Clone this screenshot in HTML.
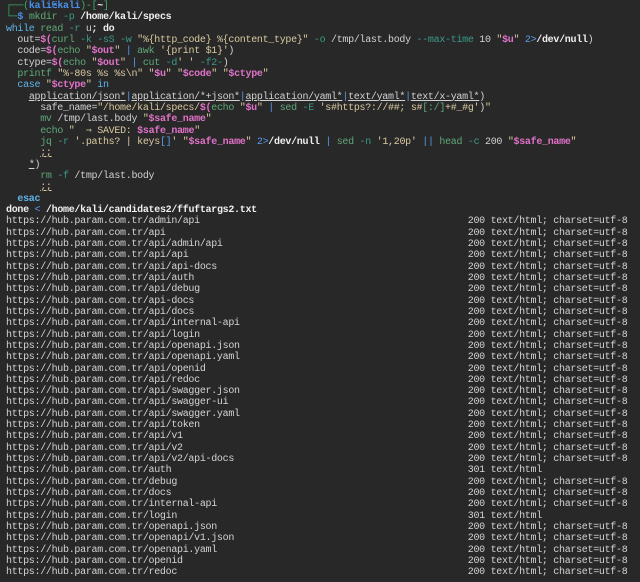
<!DOCTYPE html>
<html><head><meta charset="utf-8"><style>
html,body{margin:0;padding:0;background:#282828;width:640px;height:582px;overflow:hidden}
pre{margin:0;padding:1px 0 0 6px;font-family:"Liberation Mono","DejaVu Sans Mono",monospace;font-size:10px;letter-spacing:-0.3px;line-height:11.33px;color:#d2d2d2;white-space:pre}
.g{color:#3faa6a}.bl{color:#4a8fe8;font-weight:bold}.b{font-weight:bold;color:#f0f0f0}
.c{color:#5fa878}.o{color:#3b9a88}.s{color:#d9c9a0}.v{color:#e072c8;font-weight:bold}
.k{color:#5fb4e8}.p{color:#5a9be8}.u{text-decoration:underline}.d{color:#d4d4d4}
.at{display:inline-block;width:5.7px;font-size:7.5px;overflow:hidden;vertical-align:top;text-align:center;letter-spacing:0}
</style></head><body><pre><span class="g">┌──(</span><span class="bl">kali<span class="at">㉿</span>kali</span><span class="g">)-[</span><span class="b">~</span><span class="g">]</span>
<span class="g">└─</span><span class="bl">$</span> <span class="c">mkdir</span> <span class="o">-p</span> <span class="b">/home/kali/specs</span>
<span class="k">while</span> <span class="c">read</span> <span class="o">-r</span> u<span class="b">;</span> <span class="b">do</span>
  out=<span class="v">$(</span><span class="c">curl</span> <span class="o">-k</span> <span class="o">-sS</span> <span class="o">-w</span> <span class="s">"%{http_code} %{content_type}"</span> <span class="o">-o</span> /tmp/last.body <span class="o">--max-time</span> 10 <span class="s">"</span><span class="v">$u</span><span class="s">"</span> <span class="p">2&gt;</span><span class="b">/dev/null</span>)
  code=<span class="v">$(</span><span class="c">echo</span> <span class="s">"</span><span class="v">$out</span><span class="s">"</span> <span class="p">|</span> <span class="c">awk</span> <span class="s">'{print $1}'</span>)
  ctype=<span class="v">$(</span><span class="c">echo</span> <span class="s">"</span><span class="v">$out</span><span class="s">"</span> <span class="p">|</span> <span class="c">cut</span> <span class="o">-d</span><span class="s">' '</span> <span class="o">-f2-</span>)
  <span class="c">printf</span> <span class="s">"%-80s %s %s\n"</span> <span class="s">"</span><span class="v">$u</span><span class="s">"</span> <span class="s">"</span><span class="v">$code</span><span class="s">"</span> <span class="s">"</span><span class="v">$ctype</span><span class="s">"</span>
  <span class="k">case</span> <span class="s">"</span><span class="v">$ctype</span><span class="s">"</span> <span class="k">in</span>
    <span class="u">application/json*</span><span class="p">|</span><span class="u">application/*+json*</span><span class="p">|</span><span class="u">application/yaml*</span><span class="p">|</span><span class="u">text/yaml*</span><span class="p">|</span><span class="u">text/x-yaml*</span>)
      safe_name=<span class="s">"/home/kali/specs/</span><span class="v">$(</span><span class="c">echo</span> <span class="s">"</span><span class="v">$u</span><span class="s">"</span> <span class="p">|</span> <span class="c">sed</span> <span class="o">-E</span> <span class="s">'s#https?://##; s#</span><span class="c">[:/]</span><span class="s">+#_#g'</span>)<span class="s">"</span>
      <span class="c">mv</span> /tmp/last.body <span class="s">"</span><span class="v">$safe_name</span><span class="s">"</span>
      <span class="c">echo</span> <span class="s">"  ⇒ SAVED: </span><span class="v">$safe_name</span><span class="s">"</span>
      <span class="c">jq</span> <span class="o">-r</span> <span class="s">'.paths? | keys</span><span class="p">[]</span><span class="s">'</span> <span class="s">"</span><span class="v">$safe_name</span><span class="s">"</span> <span class="p">2&gt;</span><span class="b">/dev/null</span> <span class="p">|</span> <span class="c">sed</span> <span class="o">-n</span> <span class="s">'1,20p'</span> <span class="p">||</span> <span class="c">head</span> <span class="o">-c</span> 200 <span class="s">"</span><span class="v">$safe_name</span><span class="s">"</span>
      <span class="u s">;;</span>
    <span class="u">*</span>)
      <span class="c">rm</span> <span class="o">-f</span> /tmp/last.body
      <span class="u s">;;</span>
  <span class="k b">esac</span>
<span class="b">done</span> <span class="p">&lt;</span> <span class="b">/home/kali/candidates2/ffuftargs2.txt</span>
<span class="d">https://hub.param.com.tr/admin/api                                               200 text/html; charset=utf-8
https://hub.param.com.tr/api                                                     200 text/html; charset=utf-8
https://hub.param.com.tr/api/admin/api                                           200 text/html; charset=utf-8
https://hub.param.com.tr/api/api                                                 200 text/html; charset=utf-8
https://hub.param.com.tr/api/api-docs                                            200 text/html; charset=utf-8
https://hub.param.com.tr/api/auth                                                200 text/html; charset=utf-8
https://hub.param.com.tr/api/debug                                               200 text/html; charset=utf-8
https://hub.param.com.tr/api-docs                                                200 text/html; charset=utf-8
https://hub.param.com.tr/api/docs                                                200 text/html; charset=utf-8
https://hub.param.com.tr/api/internal-api                                        200 text/html; charset=utf-8
https://hub.param.com.tr/api/login                                               200 text/html; charset=utf-8
https://hub.param.com.tr/api/openapi.json                                        200 text/html; charset=utf-8
https://hub.param.com.tr/api/openapi.yaml                                        200 text/html; charset=utf-8
https://hub.param.com.tr/api/openid                                              200 text/html; charset=utf-8
https://hub.param.com.tr/api/redoc                                               200 text/html; charset=utf-8
https://hub.param.com.tr/api/swagger.json                                        200 text/html; charset=utf-8
https://hub.param.com.tr/api/swagger-ui                                          200 text/html; charset=utf-8
https://hub.param.com.tr/api/swagger.yaml                                        200 text/html; charset=utf-8
https://hub.param.com.tr/api/token                                               200 text/html; charset=utf-8
https://hub.param.com.tr/api/v1                                                  200 text/html; charset=utf-8
https://hub.param.com.tr/api/v2                                                  200 text/html; charset=utf-8
https://hub.param.com.tr/api/v2/api-docs                                         200 text/html; charset=utf-8
https://hub.param.com.tr/auth                                                    301 text/html
https://hub.param.com.tr/debug                                                   200 text/html; charset=utf-8
https://hub.param.com.tr/docs                                                    200 text/html; charset=utf-8
https://hub.param.com.tr/internal-api                                            200 text/html; charset=utf-8
https://hub.param.com.tr/login                                                   301 text/html
https://hub.param.com.tr/openapi.json                                            200 text/html; charset=utf-8
https://hub.param.com.tr/openapi/v1.json                                         200 text/html; charset=utf-8
https://hub.param.com.tr/openapi.yaml                                            200 text/html; charset=utf-8
https://hub.param.com.tr/openid                                                  200 text/html; charset=utf-8
https://hub.param.com.tr/redoc                                                   200 text/html; charset=utf-8</span></pre></body></html>
